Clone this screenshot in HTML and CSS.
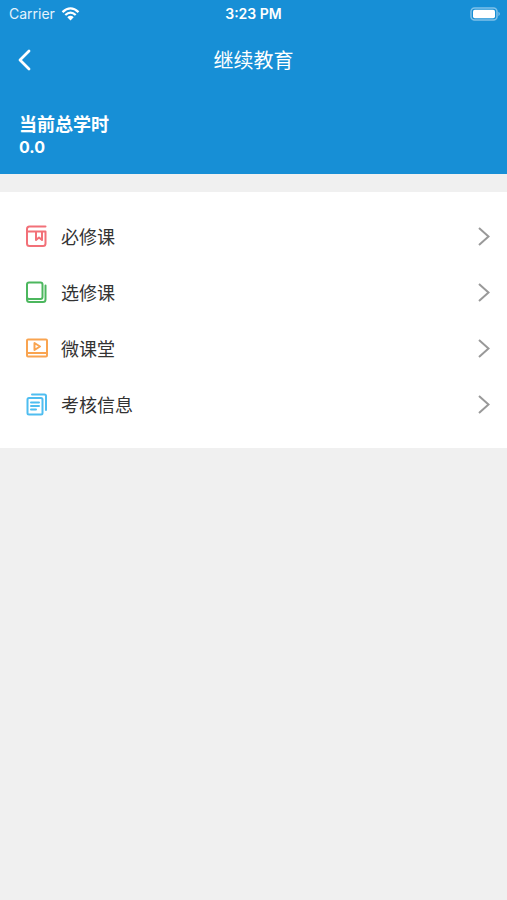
FILE: index.html
```html
<!DOCTYPE html>
<html lang="zh-CN">
<head>
<meta charset="utf-8">
<meta name="viewport" content="width=device-width, initial-scale=1">
<title>继续教育</title>
<link rel="stylesheet" href="styles.css">
</head>
<body>
<header class="header">
  <div class="status">
    <div class="carrier">
      <span>Carrier</span>
      <svg class="wifi" viewBox="0 0 18 14" aria-hidden="true">
        <path d="M1 5.2Q9-2.4 17 5.2M3.8 8Q9 3.2 14.2 8" fill="none" stroke="currentColor" stroke-width="2.3"/>
        <path d="M5.8 10.2Q9 7.4 12.2 10.2L9 13.6Z" fill="currentColor"/>
      </svg>
    </div>
    <time class="clock">3:23 PM</time>
    <svg class="battery" viewBox="0 0 32 14" aria-hidden="true">
      <rect x="2" y="1" width="26" height="12" rx="3.5" fill="none" stroke="#fff" stroke-opacity=".45" stroke-width="1.5"/>
      <rect x="4" y="2.800" width="22" height="8.400" rx="1.8" fill="#fff"/>
      <path d="M29.500 4.8Q32 7 29.500 9.2Z" fill="#fff" fill-opacity=".55"/>
    </svg>
  </div>
  <nav class="navbar">
    <button class="back" type="button" aria-label="返回">
      <svg viewBox="0 0 24 24" aria-hidden="true"><path d="M17 4L8 13l9 9" fill="none" stroke="currentColor" stroke-width="2.8" stroke-linecap="round" stroke-linejoin="round"/></svg>
    </button>
    <h1 class="title">继续教育</h1>
  </nav>
  <div class="summary">
    <div class="summary-label">当前总学时</div>
    <div class="summary-value">0.0</div>
  </div>
</header>
<main class="menu">
  <a class="row" href="#required">
    <svg class="icon red" viewBox="0 0 24 24" aria-hidden="true"><path d="M21.500 2.500H5.500Q3 2.500 3 5v14.500Q3 22 5.500 22H19q2.500 0 2.500-2.500V7.500H3.500M12 7.500V16l3-2.500 3 2.500V7.500"/></svg>
    <span class="label">必修课</span>
    <svg class="chevron" viewBox="0 0 12 20" aria-hidden="true"><path d="M1 2l9.500 8.500L1 19"/></svg>
  </a>
  <a class="row" href="#elective">
    <svg class="icon green" viewBox="0 0 24 24" aria-hidden="true"><rect x="3" y="2.500" width="15.500" height="16.500" rx="2"/><path d="M3 17v2.500Q3 22 5.500 22H19q2.500 0 2.500-2.500V5.500"/></svg>
    <span class="label">选修课</span>
    <svg class="chevron" viewBox="0 0 12 20" aria-hidden="true"><path d="M1 2l9.500 8.500L1 19"/></svg>
  </a>
  <a class="row" href="#micro">
    <svg class="icon orange" viewBox="0 0 24 24" aria-hidden="true"><rect x="3" y="3.500" width="20" height="17" rx="1"/><path d="M3 17h20M10.500 7v7l5.500-3.500z"/></svg>
    <span class="label">微课堂</span>
    <svg class="chevron" viewBox="0 0 12 20" aria-hidden="true"><path d="M1 2l9.500 8.500L1 19"/></svg>
  </a>
  <a class="row" href="#exam">
    <svg class="icon blue" viewBox="0 0 24 24" aria-hidden="true"><path d="M8 2.500h12.500q1.500 0 1.500 1.500V18"/><rect x="3.500" y="6" width="15" height="16.500" rx="1.500"/><path d="M7 10.500h8M7 14h8M7 17.500h5"/></svg>
    <span class="label">考核信息</span>
    <svg class="chevron" viewBox="0 0 12 20" aria-hidden="true"><path d="M1 2l9.500 8.500L1 19"/></svg>
  </a>
</main>
</body>
</html>
```
FILE: styles.css
```css
* {
  box-sizing: border-box;
}

body {
  margin: 0;
  background: #f0f0f0;
  color: #333;
  font-family: Inter, "Noto Sans CJK SC", sans-serif;
}

.header {
  background: #178fd6;
  color: #fff;
  padding-bottom: 17px;
}

.status {
  display: grid;
  grid-template-columns: 1fr auto 1fr;
  align-items: center;
  height: 27px;
  padding: 0 6px;
  font-size: 14px;
}

.carrier {
  display: flex;
  align-items: center;
  gap: 6px;
  padding-left: 3px;
  color: #e4f3fc;
}

.wifi {
  width: 19px;
  height: 14px;
  color: #fff;
}

.clock {
  font-weight: 600;
}

.battery {
  width: 32px;
  height: 14px;
  justify-self: end;
}

.navbar {
  display: grid;
  grid-template-columns: 48px 1fr 48px;
  align-items: center;
  height: 64px;
}

.back {
  display: flex;
  align-items: center;
  justify-content: center;
  height: 48px;
  padding: 0;
  border: 0;
  background: none;
  color: inherit;
  cursor: pointer;
}

.back svg {
  width: 24px;
  height: 24px;
}

.title {
  margin: 0;
  text-align: center;
  font-size: 20px;
  font-weight: 400;
}

.summary {
  padding: 22px 19px 0;
  font-weight: 700;
}

.summary-label {
  font-size: 18px;
  line-height: 24px;
}

.summary-value {
  font-size: 16px;
  line-height: 20px;
}

.menu {
  margin-top: 18px;
  padding: 16px 0;
  background: #fff;
}

.row {
  display: flex;
  align-items: center;
  height: 56px;
  padding: 0 17px 0 24px;
  color: inherit;
  text-decoration: none;
}

.icon {
  width: 24px;
  height: 24px;
  margin-right: 13px;
  fill: none;
  stroke: currentColor;
  stroke-width: 2;
  stroke-linejoin: round;
  stroke-linecap: round;
}

.red {
  color: #f27078;
}

.green {
  color: #4cb75e;
}

.orange {
  color: #f9a450;
}

.blue {
  color: #4fbdf0;
}

.label {
  flex: 1;
  font-size: 18px;
}

.chevron {
  width: 12px;
  height: 20px;
  fill: none;
  stroke: #999;
  stroke-width: 2;
}
```
